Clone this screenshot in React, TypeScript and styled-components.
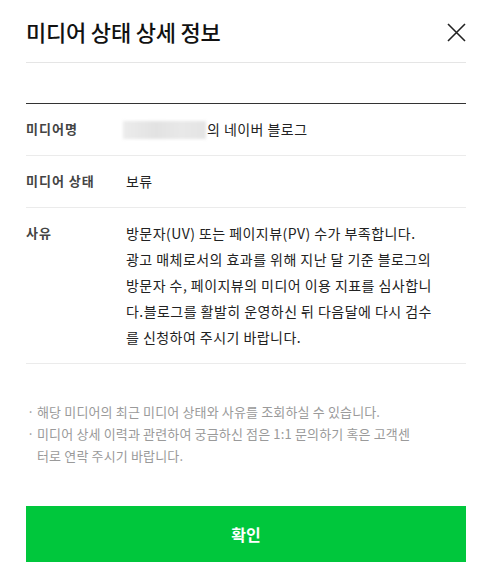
import styled, { createGlobalStyle } from "styled-components";

const GlobalStyle = createGlobalStyle`
  html, body {
    margin: 0;
    padding: 0;
    background: #ffffff;
  }
  body {
    font-family: "Noto Sans CJK KR", "Noto Sans", sans-serif;
    color: #222222;
  }
`;

const Modal = styled.div`
  width: 492px;
  box-sizing: border-box;
  padding: 0 26px 25px;
  background: #ffffff;
`;

const Header = styled.div`
  height: 63px;
  display: flex;
  align-items: center;
  justify-content: space-between;
  border-bottom: 1px solid #e5e5e5;
  box-sizing: border-box;
`;

const Title = styled.h1`
  margin: 0;
  font-size: 22px;
  font-weight: 500;
  letter-spacing: -0.2px;
  color: #111111;
`;

const CloseBtn = styled.button`
  width: 20px;
  height: 20px;
  margin-top: 2px;
  padding: 0;
  border: none;
  background: none;
  display: flex;
  align-items: center;
  justify-content: center;
  cursor: pointer;
`;

const Table = styled.dl`
  margin: 40px 0 0;
  border-top: 1px solid #333333;
`;

const Row = styled.div`
  display: flex;
  padding: 12px 0 13px;
  border-bottom: 1px solid #ebebeb;
`;

const Label = styled.dt`
  width: 100px;
  flex-shrink: 0;
  font-size: 13px;
  font-weight: 700;
  line-height: 26px;
  color: #444444;
  letter-spacing: 1px;
`;

const Value = styled.dd`
  margin: 0;
  font-size: 14px;
  line-height: 26px;
  color: #222222;
  letter-spacing: 0.45px;
  word-break: break-all;
`;

const Blurred = styled.span`
  display: inline-block;
  vertical-align: middle;
  width: 83px;
  height: 18px;
  margin: -3px 1px 0 -3px;
  background: linear-gradient(90deg, #ececec, #e2e2e2 40%, #e8e8e8 70%, #e4e4e4);
  filter: blur(1.5px);
`;

const Notes = styled.ul`
  margin: 37px 0 0;
  padding: 0;
  list-style: none;
`;

const Note = styled.li`
  position: relative;
  padding-left: 11px;
  font-size: 13px;
  line-height: 22px;
  color: #9a9a9a;
  letter-spacing: 0.15px;
  word-break: break-all;

  &::before {
    content: "·";
    position: absolute;
    left: 1px;
    top: 0;
  }
`;

const ConfirmBtn = styled.button`
  display: block;
  width: 100%;
  height: 56px;
  margin-top: 39px;
  border: none;
  background-color: #00c73c;
  color: #ffffff;
  font-family: inherit;
  font-size: 16px;
  font-weight: 700;
  cursor: pointer;
`;

function CloseIcon() {
  return (
    <svg width="19" height="19" viewBox="0 0 19 19" fill="none">
      <path d="M1 1L18 18M18 1L1 18" stroke="#222" strokeWidth="1.6" />
    </svg>
  );
}

export default function App() {
  return (
    <>
      <GlobalStyle />
      <Modal>
        <Header>
          <Title>미디어 상태 상세 정보</Title>
          <CloseBtn aria-label="닫기">
            <CloseIcon />
          </CloseBtn>
        </Header>

        <Table>
          <Row>
            <Label>미디어명</Label>
            <Value>
              <Blurred />의 네이버 블로그
            </Value>
          </Row>
          <Row>
            <Label>미디어 상태</Label>
            <Value>보류</Value>
          </Row>
          <Row>
            <Label>사유</Label>
            <Value>
              방문자(UV) 또는 페이지뷰(PV) 수가 부족합니다.
              <br />
              광고 매체로서의 효과를 위해 지난 달 기준 블로그의
              <br />
              방문자 수, 페이지뷰의 미디어 이용 지표를 심사합니
              <br />
              다.블로그를 활발히 운영하신 뒤 다음달에 다시 검수
              <br />를 신청하여 주시기 바랍니다.
            </Value>
          </Row>
        </Table>

        <Notes>
          <Note>해당 미디어의 최근 미디어 상태와 사유를 조회하실 수 있습니다.</Note>
          <Note>
            미디어 상세 이력과 관련하여 궁금하신 점은 1:1 문의하기 혹은 고객센
            <br />
            터로 연락 주시기 바랍니다.
          </Note>
        </Notes>

        <ConfirmBtn>확인</ConfirmBtn>
      </Modal>
    </>
  );
}
